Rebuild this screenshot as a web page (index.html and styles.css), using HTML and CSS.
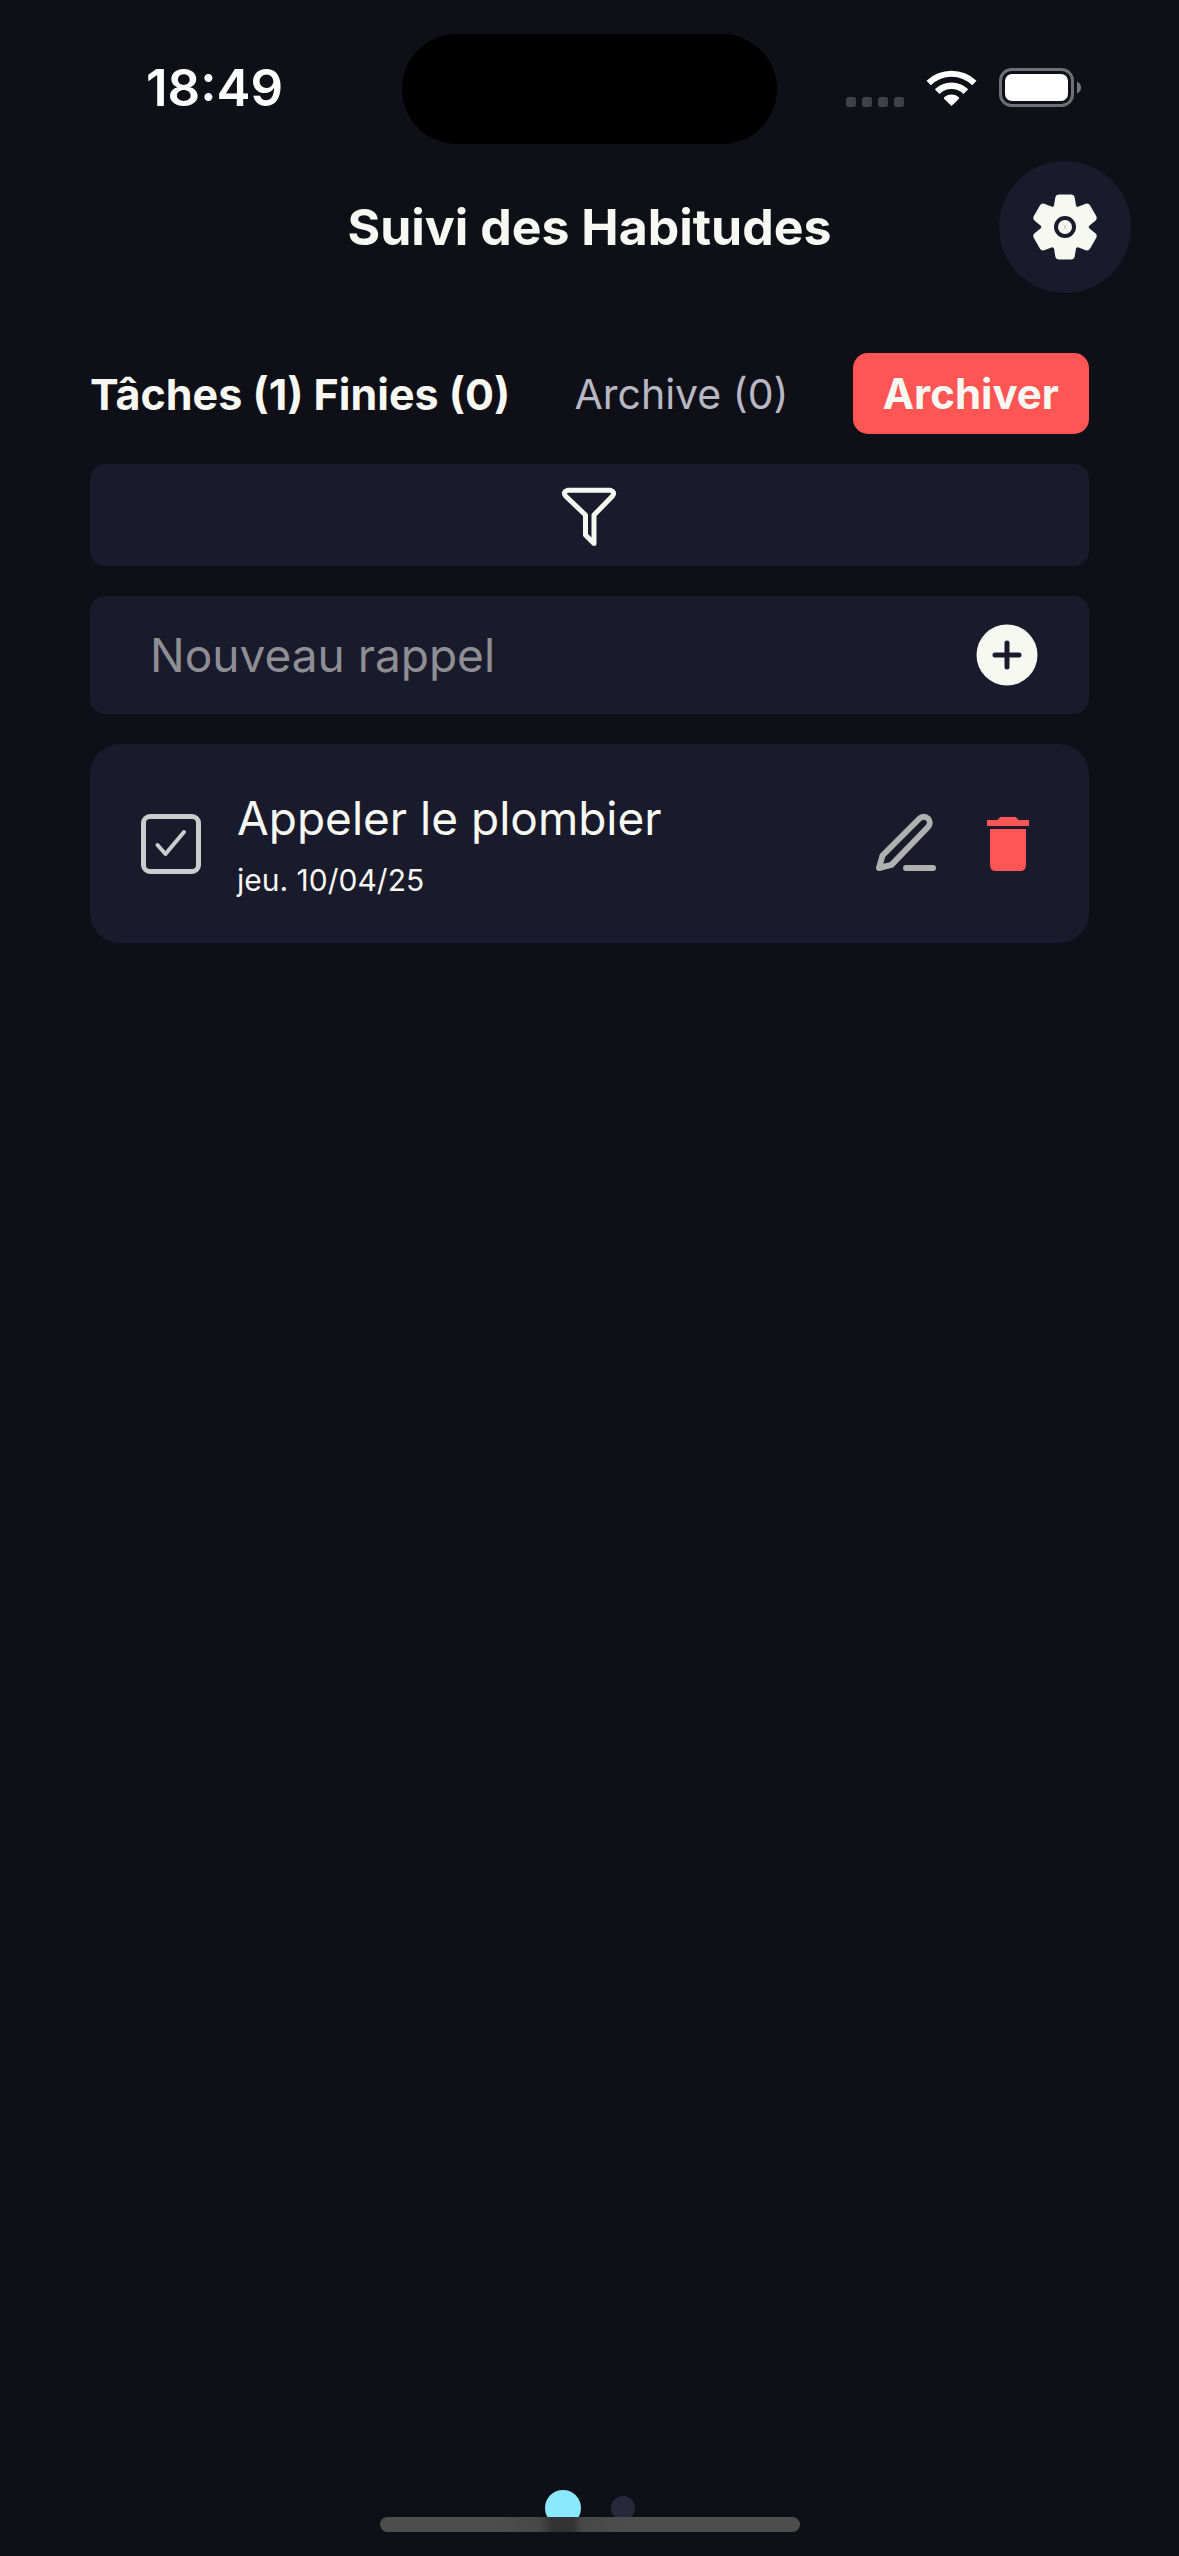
FILE: index.html
```html
<!DOCTYPE html>
<html lang="fr">
<head>
<meta charset="utf-8">
<meta name="viewport" content="width=device-width, initial-scale=1">
<title>Suivi des Habitudes</title>
<link rel="stylesheet" href="styles.css">
</head>
<body class="app">
  <div class="status">
    <time class="status-time">18:49</time>
    <div class="island"></div>
    <div class="status-icons">
      <svg class="signal" viewBox="0 0 58 10" width="58" height="10" aria-hidden="true">
        <rect x="0" width="10" height="10" rx="3"/><rect x="16" width="10" height="10" rx="3"/><rect x="32" width="10" height="10" rx="3"/><rect x="48" width="10" height="10" rx="3"/>
      </svg>
      <svg class="wifi" viewBox="0 0 51 37" width="51" height="37" aria-hidden="true">
        <path d="M0.5 11.8A36 36 0 0 1 50.5 11.8L46.2 16.2A29.5 29.5 0 0 0 4.800 16.2Z" stroke-linejoin="round"/>
        <path d="M8.800 20.200A24.300 24.300 0 0 1 42.200 20.200L37.500 25A17 17 0 0 0 13.500 25Z"/>
        <path d="M25.500 37L17.800 29.400Q17.800 28.600 18.500 28A11.500 11.500 0 0 1 32.500 28Q33.200 28.600 33.200 29.400Z"/>
      </svg>
      <svg class="battery" viewBox="0 0 82 39" width="82" height="39" aria-hidden="true">
        <rect class="battery-shell" x="1.5" y="1.5" width="72" height="36" rx="11"/>
        <rect class="battery-fill" x="6" y="6" width="63" height="27" rx="7"/>
        <path class="battery-nub" d="M78 13.500Q82 15.500 82 19.500T78 25.500Z"/>
      </svg>
    </div>
  </div>

  <header class="header">
    <h1 class="title">Suivi des Habitudes</h1>
    <button class="settings" type="button" aria-label="Réglages">
      <svg viewBox="-33 -33 66 66" width="66" height="66" aria-hidden="true">
        <defs><path id="tooth" d="M0 0L-12.500 -19.800Q-11.200 -20.300 -10.900 -22L-9.700 -29.500Q-9 -32.500 -6 -32.500H6Q9 -32.500 9.700 -29.500L10.900 -22Q11.200 -20.300 12.500 -19.800Z"/></defs>
        <g class="gear">
          <use href="#tooth"/><use href="#tooth" transform="rotate(60)"/><use href="#tooth" transform="rotate(120)"/><use href="#tooth" transform="rotate(180)"/><use href="#tooth" transform="rotate(240)"/><use href="#tooth" transform="rotate(300)"/>
        </g>
        <circle class="gear-ring" r="9"/>
      </svg>
    </button>
  </header>

  <main class="content">
    <div class="summary">
      <h2 class="counts">Tâches (1) Finies (0)</h2>
      <a class="archive-link" href="#archive">Archive (0)</a>
      <button class="archive-button" type="button">Archiver</button>
    </div>

    <button class="filter" type="button" aria-label="Filtrer">
      <svg viewBox="37 22 66 66" width="66" height="66" aria-hidden="true">
        <path d="M47.500 30.300H90.500Q95.500 32 92.500 36L74 55V83.500L65.500 75V55L45.500 36Q42.500 32 47.500 30.300Z"/>
      </svg>
    </button>

    <form class="new-task">
      <input class="new-task-input" type="text" placeholder="Nouveau rappel" aria-label="Nouveau rappel">
      <button class="icon-button" type="button" aria-label="Ajouter">
        <svg viewBox="0 0 62 62" width="62" height="62" aria-hidden="true">
          <circle class="add-disc" cx="31" cy="31" r="30.500"/>
          <path class="add-plus" d="M31 19V43M19 31H43"/>
        </svg>
      </button>
    </form>

    <ul class="tasks">
      <li class="task">
        <span class="check">
          <input class="check-input" id="task-1" type="checkbox">
          <svg class="check-mark" viewBox="0 0 60 60" width="60" height="60" aria-hidden="true"><path d="M16.500 31L24.500 40L43 18"/></svg>
        </span>
        <label class="task-text" for="task-1">
          <span class="task-name">Appeler le plombier</span>
          <span class="task-date">jeu. 10/04/25</span>
        </label>
        <button class="icon-button" type="button" aria-label="Modifier">
          <svg class="pencil" viewBox="13 11 69 66" width="69" height="66" aria-hidden="true">
            <path d="M19 68L22.500 55.500L59.500 18.500A6 6 0 0 1 68 27L31.500 64.800ZM46 68H73"/>
          </svg>
        </button>
        <button class="icon-button" type="button" aria-label="Supprimer">
          <svg class="trash" viewBox="118 14 60 60" width="60" height="60" aria-hidden="true">
            <path d="M127 20H137.500L140 17H156L158.500 20H169V26H127ZM130 29H166V65Q166 71 160 71H136Q130 71 130 65Z"/>
          </svg>
        </button>
      </li>
    </ul>
  </main>

  <footer class="footer">
    <nav class="pages" aria-label="Pages">
      <a class="page page-current" href="#taches" aria-label="Tâches"></a>
      <a class="page" href="#habitudes" aria-label="Habitudes"></a>
    </nav>
    <div class="home-bar"></div>
  </footer>
</body>
</html>
```
FILE: styles.css
```css
:root {
  --bg: #0f0f18;
  --card: #1a1a2d;
  --text: #f8f8f2;
  --red: #ff5555;
}

* {
  box-sizing: border-box;
}

.app {
  display: flex;
  flex-direction: column;
  min-height: 100vh;
  margin: 0;
  background: var(--bg);
  color: var(--text);
  font-family: Inter, "Liberation Sans", sans-serif;
}

button {
  display: grid;
  place-items: center;
  padding: 0;
  border: 0;
  background: none;
  color: inherit;
  font: inherit;
  cursor: pointer;
}

/* Status bar */
.status {
  display: grid;
  grid-template-columns: 1fr auto 1fr;
  align-items: center;
  padding: 34px 98px 17px;
}

.status-time {
  padding: 0 0 3px 48px;
  color: #fff;
  font-size: 51px;
  font-weight: 600;
}

.island {
  width: 375px;
  height: 110px;
  border-radius: 55px;
  background: #000;
}

.status-icons {
  display: flex;
  align-items: center;
  justify-content: flex-end;
  gap: 22px;
  padding-bottom: 3px;
  fill: #fff;
}

.signal {
  align-self: flex-end;
  fill: #41414a;
}

.battery-shell {
  fill: none;
  stroke: #6f6f75;
  stroke-width: 3;
}

.battery-nub {
  fill: #77777c;
}

/* Header */
.header {
  display: grid;
  grid-template-columns: 1fr auto 1fr;
  align-items: center;
  padding: 0 48px;
  border-bottom: 1px solid #0b0b12;
}

.title {
  grid-column: 2;
  margin: 0;
  font-size: 50px;
  font-weight: 700;
}

.settings {
  justify-self: end;
  width: 132px;
  height: 132px;
  border-radius: 50%;
  background: var(--card);
}

.gear {
  fill: var(--text);
}

.gear-ring {
  fill: none;
  stroke: var(--card);
  stroke-width: 4;
}

/* Content */
.content {
  display: flex;
  flex: 1;
  flex-direction: column;
  gap: 30px;
  padding: 59px 90px 0;
}

.summary {
  display: flex;
  align-items: center;
  justify-content: space-between;
  font-size: 42px;
}

.counts {
  margin: 0;
  font-size: 43px;
  font-weight: 700;
}

.archive-link {
  color: #b8b8c4;
  font-size: 41px;
  text-decoration: none;
}

.archive-button {
  height: 81px;
  padding: 0 30px;
  border-radius: 15px;
  background: var(--red);
  font-weight: 700;
}

.filter {
  height: 102px;
  border-radius: 15px;
  background: var(--card);
}

.filter path {
  fill: none;
  stroke: var(--text);
  stroke-width: 5;
  stroke-linejoin: round;
}

.new-task {
  display: flex;
  align-items: center;
  height: 118px;
  padding: 0 51px 0 60px;
  border-radius: 15px;
  background: var(--card);
}

.new-task-input {
  flex: 1;
  min-width: 0;
  padding: 0;
  border: 0;
  outline: 0;
  background: none;
  color: var(--text);
  font: inherit;
  font-size: 46px;
}

.new-task-input::placeholder {
  color: #8e8e93;
  opacity: 1;
}

.add-disc {
  fill: var(--text);
}

.add-plus {
  fill: none;
  stroke: var(--card);
  stroke-width: 5;
  stroke-linecap: round;
}

.tasks {
  margin: 0;
  padding: 0;
  list-style: none;
}

.task {
  display: flex;
  align-items: center;
  gap: 36px;
  min-height: 199px;
  padding: 0 51px;
  border-radius: 30px;
  background: var(--card);
}

.check {
  display: grid;
  place-items: center;
}

.check-input,
.check-mark {
  grid-area: 1 / 1;
}

.check-input {
  width: 60px;
  height: 60px;
  margin: 0;
  border: 5px solid #ccc;
  border-radius: 9px;
  appearance: none;
}

.check-mark {
  fill: none;
  stroke: #ccc;
  stroke-width: 4;
  stroke-linecap: round;
  stroke-linejoin: round;
  pointer-events: none;
}

.task-text {
  display: flex;
  flex: 1;
  flex-direction: column;
  gap: 16px;
}

.task-name {
  font-size: 46px;
  line-height: 56px;
}

.task-date {
  font-size: 30px;
  line-height: 36px;
}

.pencil {
  fill: none;
  stroke: #b0b0b0;
  stroke-width: 6;
  stroke-linecap: round;
  stroke-linejoin: round;
}

.trash {
  fill: var(--red);
}

/* Page dots and home indicator */
.footer {
  display: grid;
  justify-items: center;
  padding-bottom: 24px;
}

.pages {
  display: flex;
  align-items: center;
  gap: 30px;
}

.page {
  width: 24px;
  height: 24px;
  border-radius: 50%;
  background: #28283d;
}

.page-current {
  width: 36px;
  height: 36px;
  background: #8be9fd;
}

.home-bar {
  position: relative;
  width: 420px;
  height: 15px;
  margin-top: -9px;
  border-radius: 8px;
  background: linear-gradient(90deg, #4d4d4d 28%, #474747 38%, #333 41%, #333 46%, #474747 48%, #4d4d4d 58%);
}
```
